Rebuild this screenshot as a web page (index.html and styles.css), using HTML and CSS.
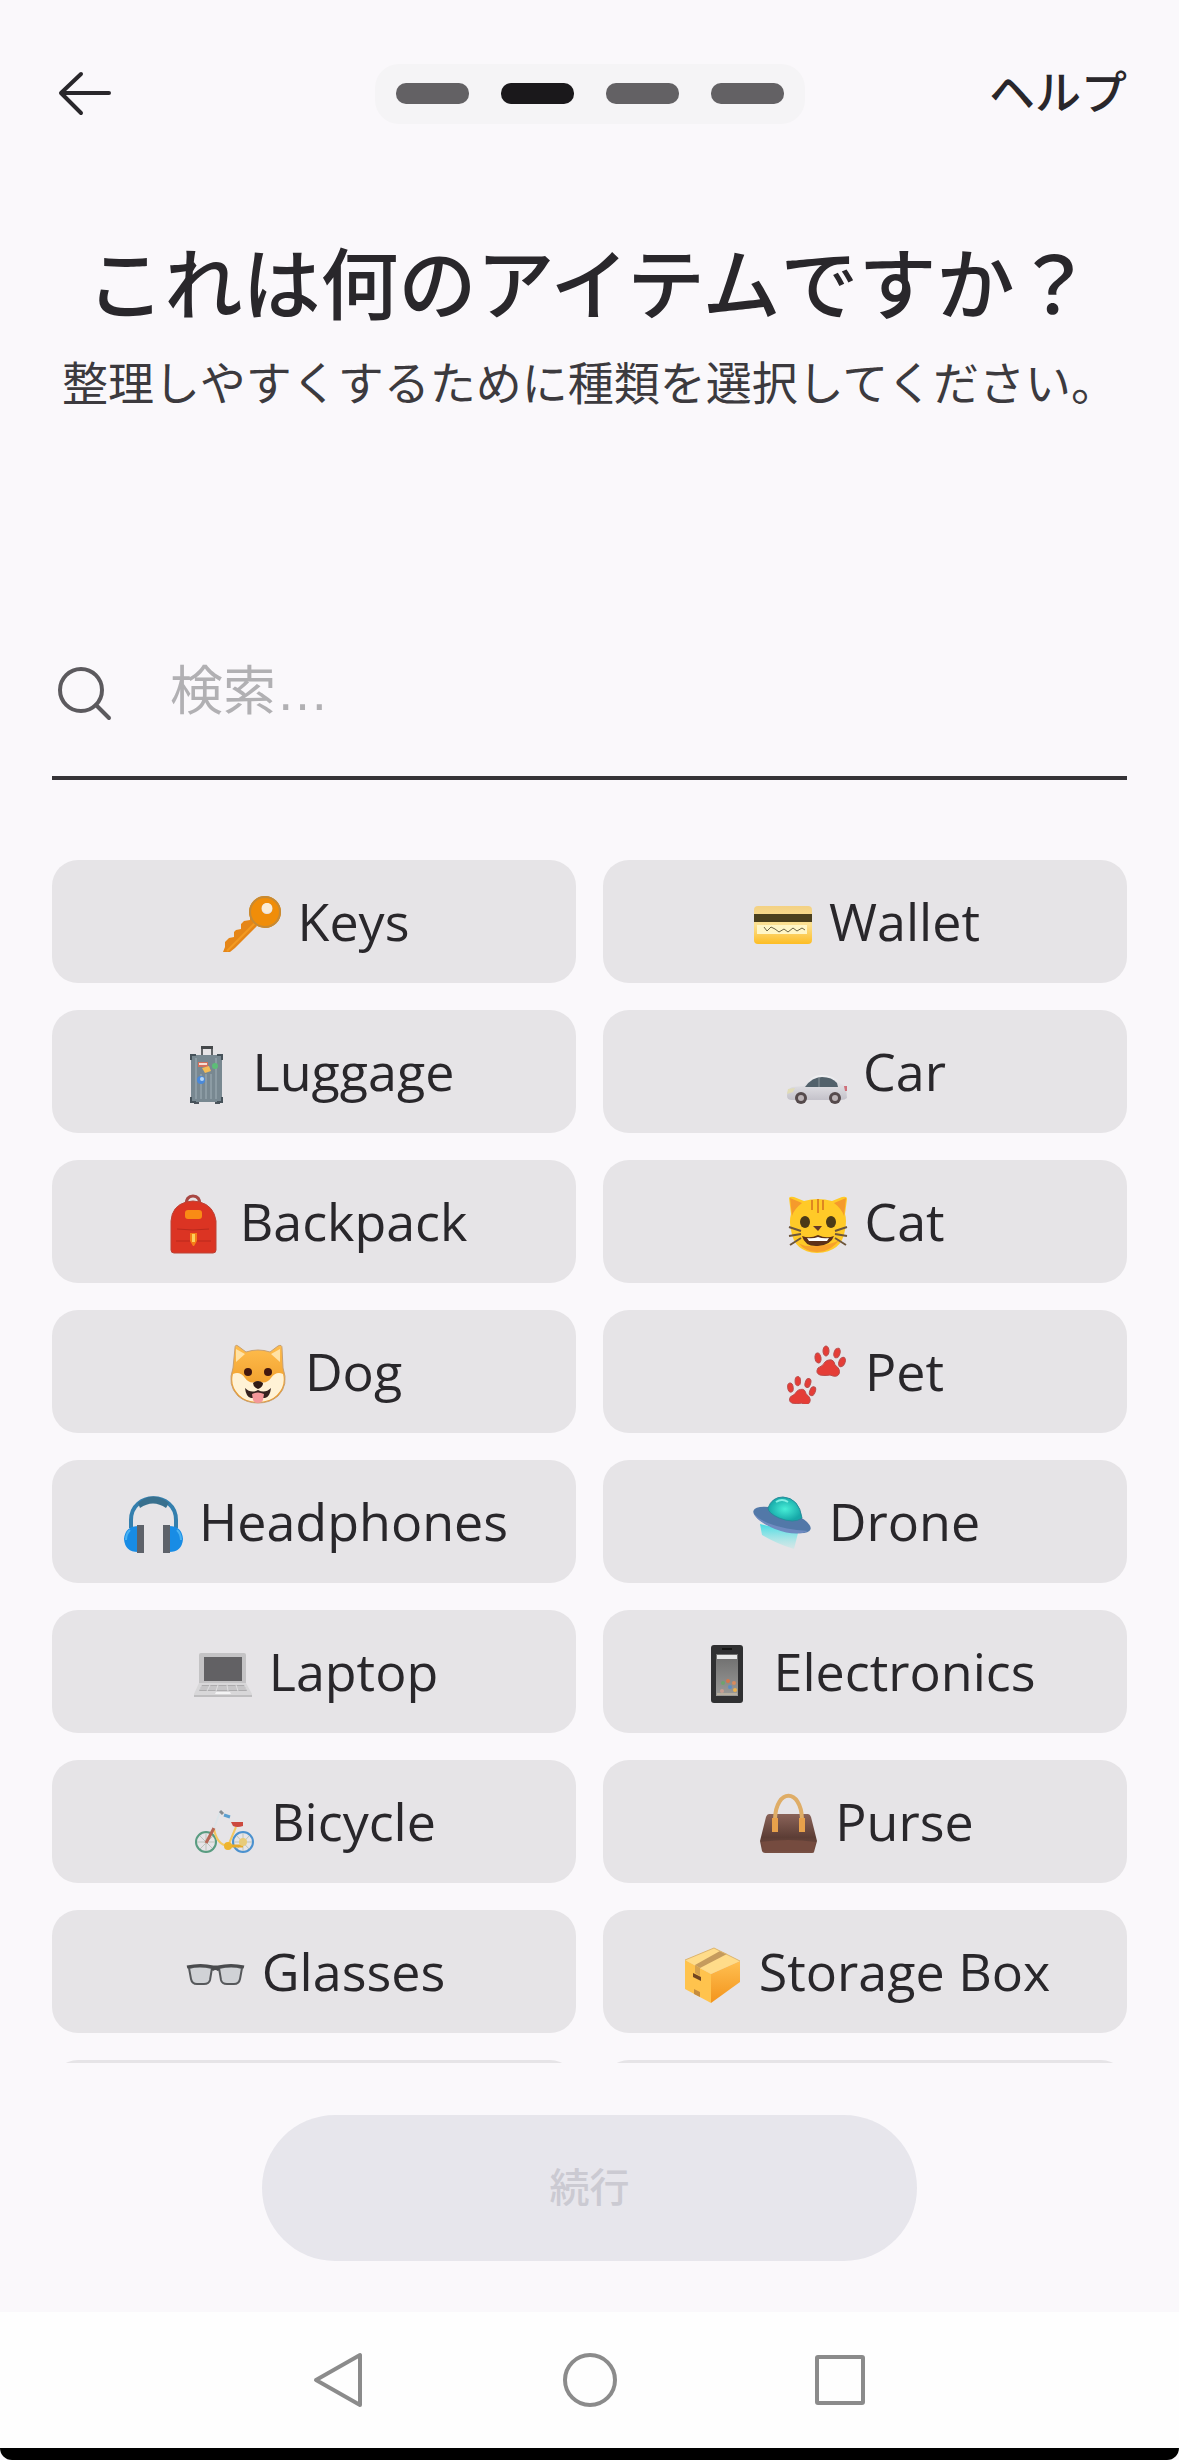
FILE: index.html
```html
<!DOCTYPE html>
<html lang="ja">
<head>
<meta charset="utf-8">
<meta name="viewport" content="width=device-width, initial-scale=1">
<title>これは何のアイテムですか？</title>
<link rel="stylesheet" href="styles.css">
</head>
<body>
<div class="screen">
  <header class="topbar">
    <button class="back" type="button" aria-label="戻る">
      <svg class="back-icon" viewBox="0 0 66 60"><path d="M57 29H10M29 10L9 29L29 49" fill="none" stroke="currentColor" stroke-width="4" stroke-linecap="round" stroke-linejoin="round"/></svg>
    </button>
    <div class="steps">
      <span class="step"></span>
      <span class="step step-current"></span>
      <span class="step"></span>
      <span class="step"></span>
    </div>
    <a class="help" href="#help">ヘルプ</a>
  </header>

  <main class="content">
    <h1 class="title">これは何のアイテムですか？</h1>
    <p class="subtitle">整理しやすくするために種類を選択してください。</p>

    <label class="search">
      <svg class="search-icon" viewBox="0 0 64 64" role="img" aria-label="検索"><g fill="none" stroke="currentColor" stroke-width="4" stroke-linecap="round"><circle cx="29" cy="28" r="21"/><path d="M44 43L57 56"/></g></svg>
      <input class="search-input" type="text" placeholder="検索…">
    </label>

    <div class="list">
      <button class="tile" type="button">
        <svg class="emoji" viewBox="0 0 64 64">
          <path d="M31 25L31 30L25 31L22 34L22 39L17 40L15 42L15 47L10 48L6 52L6 57L4 62H11L16 58L38 36Z" fill="#e58618"/>
          <path d="M8 61L37 32" stroke="#f39a21" stroke-width="2"/>
          <path fill-rule="evenodd" d="M46 6a16 16 0 1 0 0 32a16 16 0 1 0 0-32zM48 13a5 5 0 1 1 0 11a5 5 0 1 1 0-11z" fill="#f08d09"/>
          <circle cx="46" cy="22" r="15" fill="none" stroke="#c58a36" stroke-width="2"/>
          <circle cx="48" cy="18" r="5" fill="#fbecd5"/>
        </svg><span>Keys</span>
      </button>
      <button class="tile" type="button">
        <svg class="emoji" viewBox="0 0 64 64">
          <defs><linearGradient id="card" x2="0" y2="1"><stop offset="0" stop-color="#f3d184"/><stop offset=".5" stop-color="#fbe092"/><stop offset="1" stop-color="#fdbd24"/></linearGradient></defs>
          <rect x="4" y="16" width="58" height="38" rx="4" fill="url(#card)"/>
          <path d="M4 24h58v8H4z" fill="#4a3f1d"/>
          <path d="M7 35h50v9H7z" fill="#fff6c7"/>
          <path d="M14 37l3 4 4-4 4 2 4 3 5-3 4 3 5-4 4 3 5-3 3 2" fill="none" stroke="#6c6445" stroke-width="1"/>
        </svg><span>Wallet</span>
      </button>
      <button class="tile" type="button">
        <svg class="emoji" viewBox="0 0 64 64">
          <path d="M28 15V7h10v8" fill="none" stroke="#626568" stroke-width="2"/><path d="M27 6h12v3H27z" fill="#45484b"/>
          <path d="M20 60h5v4h-5zM41 60h5v4h-5z" fill="#4d545c"/>
          <rect x="17" y="15" width="31" height="47" rx="3" fill="#788891"/>
          <path d="M22 18v41M27 34v25M32 34v25M37 34v25M42 18v41" stroke="#a0afb7" stroke-width="1"/>
          <path d="M17 20v-5h5M43 15h5v5M48 57v5h-5M22 62h-5v-5" fill="none" stroke="#46525a" stroke-width="2"/>
          <path d="M24 22h10v5H24z" fill="#d3705b"/><path d="M25 23h8v2h-8z" fill="#f6ded2"/><path d="M28 28l7-2 2 5-6 2z" fill="#f4bd55"/><circle cx="41" cy="26" r="3" fill="#5dbd77"/><circle cx="27" cy="40" r="4" fill="#4a89d9"/><circle cx="28" cy="39" r="2" fill="#b5d6f6"/>
        </svg><span>Luggage</span>
      </button>
      <button class="tile" type="button">
        <svg class="emoji" viewBox="0 0 64 64">
          <defs><linearGradient id="car" x2="0" y2="1"><stop offset="0" stop-color="#f2f2f4"/><stop offset="1" stop-color="#c4c2ca"/></linearGradient></defs>
          <path d="M20 46Q27 35 37 35Q50 35 56 43L62 47L63 58Q61 60 57 60H8Q3 60 3 56Q3 49 8 47Z" fill="url(#car)"/>
          <path d="M21 47Q28 37 38 37Q48 37 53 43L54 47Z" fill="#52616b"/>
          <path d="M35 37v10" stroke="#8b969c" stroke-width="1"/><path d="M4 49l7-1-2 4-6 2z" fill="#e1dcb7"/><path d="M60 46h3v5h-2z" fill="#cf707a"/>
          <circle cx="17" cy="58" r="6" fill="#554a4c"/><circle cx="17" cy="58" r="3" fill="#bbb3b6"/>
          <circle cx="51" cy="58" r="6" fill="#554a4c"/><circle cx="51" cy="58" r="3" fill="#bbb3b6"/>
        </svg><span>Car</span>
      </button>
      <button class="tile" type="button">
        <svg class="emoji" viewBox="0 0 64 64">
          <path d="M25 15Q25 6 32 6T39 15" fill="none" stroke="#a84743" stroke-width="3"/>
          <path d="M10 31Q11 16 25 12Q32 10 39 12Q53 16 55 31V60Q55 63 52 63H13Q10 63 10 60Z" fill="#db3423" stroke="#bc4236" stroke-width="1"/>
          <path d="M16 39Q32 41 48 39M15 51h35" fill="none" stroke="#b9291d" stroke-width="1"/>
          <rect x="24" y="20" width="17" height="9" rx="3" fill="#f98b15"/>
          <path d="M29 43h7v8l-3 5h-1l-3-5z" fill="#f57d17"/><path d="M31 44h3v8h-3z" fill="#fbd05b"/>
        </svg><span>Backpack</span>
      </button>
      <button class="tile" type="button">
        <svg class="emoji" viewBox="0 0 64 64">
          <path d="M4 8Q5 6 9 7L19 11Q33 7 47 11L57 7Q62 6 62 9L60 24Q62 30 60 40Q57 62 32 63Q9 62 6 40Q4 31 6 24Z" fill="#ffca28"/>
          <path d="M5 8L17 13Q9 19 7 26ZM61 8L49 13Q57 19 59 26Z" fill="#f59a2c"/>
          <path d="M10 48Q18 62 32 62T56 48Q51 54 32 56T10 48Z" fill="#f8a12c"/>
          <path d="M27 10v10M33 9v14M38 10v10" stroke="#de8621" stroke-width="2"/>
          <ellipse cx="20" cy="32" rx="5" ry="6" fill="#4b3a17"/><ellipse cx="46" cy="32" rx="5" ry="6" fill="#4b3a17"/>
          <path d="M28 36h9l-4 5z" fill="#643828"/>
          <path d="M17 46Q25 49 33 45Q41 49 49 46Q46 55 33 56T17 46Z" fill="#5d3018"/><path d="M22 48Q28 49 33 47Q38 49 44 48L42 51H24Z" fill="#fff"/>
          <path d="M4 37l12 4M4 46l12-2M5 55l11-7M62 37l-12 4M62 46l-12-2M61 55l-11-7" stroke="#6d563c" stroke-width="2"/>
        </svg><span>Cat</span>
      </button>
      <button class="tile" type="button">
        <svg class="emoji" viewBox="0 0 64 64">
          <defs><linearGradient id="dog" x2="0" y2="1"><stop offset="0" stop-color="#ffbd4d"/><stop offset="1" stop-color="#eb9420"/></linearGradient></defs>
          <path d="M9 8Q9 4 12 6L20 12Q32 8 44 12L52 6Q56 4 56 8L57 28Q63 45 52 56Q44 63 32 63T12 56Q1 45 7 28Z" fill="url(#dog)" stroke="#c8a071" stroke-width="1"/>
          <path d="M10 9L19 14L10 22ZM54 9L45 14L54 22Z" fill="#ffe2a6"/>
          <path d="M7 34Q14 31 19 38Q24 45 32 41Q40 45 45 38Q50 31 57 34Q60 46 51 55Q44 62 32 62T13 55Q4 46 7 34Z" fill="#fff2d5"/>
          <ellipse cx="22" cy="32" rx="4" ry="4" fill="#43180f"/><ellipse cx="42" cy="32" rx="4" ry="4" fill="#43180f"/>
          <path d="M27 43Q32 39 37 43Q37 47 32 49Q27 47 27 43Z" fill="#301b16"/>
          <path d="M19 48Q25 54 32 50Q39 54 45 48Q44 57 39 58H25Q20 57 19 48Z" fill="#36231f"/>
          <path d="M26 54Q32 51 38 54L37 60Q36 63 32 63T27 60Z" fill="#f4989a"/>
        </svg><span>Dog</span>
      </button>
      <button class="tile" type="button">
        <svg class="emoji" viewBox="0 0 64 64">
          <g fill="#e53d37" stroke="#b94b4b" stroke-width="1">
            <g id="paw"><ellipse cx="32" cy="18" rx="3" ry="5" transform="rotate(-8 32 18)"/><ellipse cx="40" cy="11" rx="3" ry="5"/><ellipse cx="51" cy="13" rx="3" ry="5" transform="rotate(18 51 13)"/><ellipse cx="56" cy="22" rx="3" ry="5" transform="rotate(24 56 22)"/><path d="M43 20Q48 19 49 25Q55 29 53 34Q51 38 44 35Q39 36 34 35Q29 33 32 28Q37 26 39 22Q41 20 43 20Z"/></g>
            <use href="#paw" transform="translate(-25 31) scale(.92)"/>
          </g>
        </svg><span>Pet</span>
      </button>
      <button class="tile" type="button">
        <svg class="emoji" viewBox="0 0 64 64">
          <path d="M11 38V30C11 1 56 1 56 30V38" fill="none" stroke="#347fae" stroke-width="4"/>
          <path d="M18 13Q33 0 49 13L46 18Q33 9 20 18Z" fill="#39708e"/>
          <path d="M19 36Q5 36 4 49Q5 62 18 62ZM49 36Q62 36 63 49Q62 62 49 62Z" fill="#188ce5"/>
          <path d="M10 40Q6 44 6 50M57 40Q61 44 61 50" stroke="#49b2f2" fill="none" stroke-width="2"/>
          <path d="M17 35h7v28h-7zM43 35h7v28h-7z" fill="#5e626a"/>
        </svg><span>Headphones</span>
      </button>
      <button class="tile" type="button">
        <svg class="emoji" viewBox="0 0 64 64">
          <defs><linearGradient id="beam" x2="0" y2="1"><stop offset="0" stop-color="#42dbe3"/><stop offset="1" stop-color="#90ece8" stop-opacity=".2"/></linearGradient><radialGradient id="dome"><stop offset="0" stop-color="#47eed7"/><stop offset="1" stop-color="#16a8a8"/></radialGradient></defs>
          <path d="M10 34L48 43L44 59Q27 54 12 45Z" fill="url(#beam)"/>
          <ellipse cx="32" cy="30" rx="30" ry="10" transform="rotate(18 32 30)" fill="#5278a8"/>
          <path d="M4 24Q17 38 58 41Q46 47 25 39Q8 32 4 24Z" fill="#6f8ac0"/>
          <path d="M18 18Q22 7 33 7Q49 8 52 28Q44 34 29 28Q18 23 18 18Z" fill="url(#dome)" stroke="#288b9b" stroke-width="1"/>
          <path d="M26 12Q32 8 38 12" fill="none" stroke="#83efe3" stroke-width="2"/>
        </svg><span>Drone</span>
      </button>
      <button class="tile" type="button">
        <svg class="emoji" viewBox="0 0 64 64">
          <path d="M11 13H54Q56 13 56 15V43H9V15Q9 13 11 13Z" fill="#c4c3c5"/>
          <path d="M14 17H52V41H14Z" fill="#626164"/>
          <path d="M9 43H56L62 54V57H4V54Z" fill="#d8d7d9"/><path d="M12 45H54L57 51H9Z" fill="#adacae"/>
          <path d="M11 47H55M10 49H56M20 45L17 51M28 45L26 51M37 45L38 51M46 45L48 51" stroke="#dfdee0" stroke-width="1"/><path d="M26 52H40L41 54H25Z" fill="#f4f4f5"/><path d="M4 56h58" stroke="#a6a5a7" stroke-width="1"/>
        </svg><span>Laptop</span>
      </button>
      <button class="tile" type="button">
        <svg class="emoji" viewBox="0 0 64 64">
          <defs><linearGradient id="phone" x2="0" y2="1"><stop offset="0" stop-color="#6d6d6d"/><stop offset="1" stop-color="#9b9a98"/></linearGradient></defs>
          <rect x="16" y="5" width="32" height="58" rx="3" fill="#303032"/>
          <path d="M21 14H43V56H21Z" fill="url(#phone)"/><path d="M22 15H42V19H22Z" fill="#e9e9e9"/><path d="M27 9H37" stroke="#151515" stroke-width="2"/>
          <circle cx="28" cy="43" r="2" fill="#6ea36d"/><circle cx="33" cy="41" r="2" fill="#d87649"/><circle cx="39" cy="43" r="2" fill="#d98a5d"/><circle cx="35" cy="47" r="2" fill="#5b8dc4"/><circle cx="40" cy="50" r="2" fill="#edb14c"/><circle cx="27" cy="51" r="2" fill="#c89d91"/><path d="M22 54h20" stroke="#d7c6a9" stroke-width="1"/>
        </svg><span>Electronics</span>
      </button>
      <button class="tile" type="button">
        <svg class="emoji" viewBox="0 0 64 64" fill="none">
          <path d="M4 52h21M14 42v21M7 45l15 15M22 45L7 60M40 52h21M51 42v21M44 45l14 15M58 45L44 60" stroke="#bcc5bc" stroke-width="1"/>
          <circle cx="14" cy="52" r="10" stroke="#599c81" stroke-width="2"/><circle cx="51" cy="52" r="10" stroke="#4b91cf" stroke-width="2"/>
          <path d="M22 39Q25 55 36 56L44 37" stroke="#f4c862" stroke-width="2"/>
          <path d="M14 53L22 38" stroke="#b66755" stroke-width="3"/><path d="M22 38L28 22" stroke="#dbe4e9" stroke-width="2"/>
          <path d="M28 21L31 24" stroke="#858b91" stroke-width="3"/><path d="M32 25L38 27" stroke="#5b9fd0" stroke-width="3"/>
          <path d="M39 32H51V36Q45 38 41 36Z" fill="#cc493f"/><path d="M35 56H51" stroke="#e6aa2b" stroke-width="3"/><circle cx="36" cy="56" r="4" fill="#eeb42d"/><circle cx="51" cy="52" r="4" fill="#e8cb79"/>
        </svg><span>Bicycle</span>
      </button>
      <button class="tile" type="button">
        <svg class="emoji" viewBox="0 0 64 64">
          <defs><linearGradient id="bag" x2="0" y2="1"><stop offset="0" stop-color="#8a6359"/><stop offset=".6" stop-color="#5c3d35"/><stop offset="1" stop-color="#795044"/></linearGradient></defs>
          <path d="M13 24H52Q54 24 55 27L61 51L58 62Q58 63 56 63H9Q7 63 6 61L4 51L10 27Q11 24 13 24Z" fill="url(#bag)"/>
          <path d="M5 52Q32 48 60 52L57 61H8Z" fill="#754b3f"/>
          <path d="M19 39V29C20-2 45-2 46 29V39" fill="none" stroke="#dfad67" stroke-width="4"/><path d="M16 28h6v14h-6zM43 28h6v14h-6z" fill="#e8a14b"/>
        </svg><span>Purse</span>
      </button>
      <button class="tile" type="button">
        <svg class="emoji" viewBox="0 0 64 64">
          <g fill="#d0d2d6" stroke="#56585b" stroke-width="2" stroke-linejoin="round"><path d="M6 28Q16 25 29 28L27 40Q26 44 21 44H14Q9 44 8 39Z"/><path d="M36 28Q49 25 59 28L57 39Q56 44 51 44H44Q39 44 38 40Z"/></g>
          <path d="M4 27Q18 24 30 27H35Q48 24 61 27M29 30Q32 27 36 30" fill="none" stroke="#4a4b4e" stroke-width="3"/>
        </svg><span>Glasses</span>
      </button>
      <button class="tile" type="button">
        <svg class="emoji" viewBox="0 0 64 64">
          <defs><linearGradient id="boxside" x2="0" y2="1"><stop offset="0" stop-color="#ffc052"/><stop offset="1" stop-color="#f3941c"/></linearGradient></defs>
          <path d="M34 8L60 21L31 34L5 20Z" fill="#ffdc8a"/><path d="M5 20L31 34V63L5 49Z" fill="#ffc34d"/><path d="M60 21L31 34V63L60 42Z" fill="url(#boxside)"/>
          <path d="M40 11L47 14L20 28L15 25Z" fill="#c59b5d"/><path d="M15 25L20 28V36L15 33Z" fill="#d6a24e"/>
          <path d="M13 33L21 37V41L13 37Z" fill="#714421"/><path d="M14 49L20 52V57L14 54Z" fill="#c68c3d"/>
          <path d="M5 20L34 8L60 21" fill="none" stroke="#ddb46d" stroke-width="1"/>
        </svg><span>Storage Box</span>
      </button>
      <div class="tile" aria-hidden="true"></div>
      <div class="tile" aria-hidden="true"></div>
    </div>

    <button class="continue" type="button" disabled>続行</button>
  </main>

  <nav class="system-nav">
    <button class="nav-button" type="button" aria-label="戻る"><svg class="nav-icon" viewBox="0 0 56 56"><path d="M48 3V53L4 28Z"/></svg></button>
    <button class="nav-button" type="button" aria-label="ホーム"><svg class="nav-icon" viewBox="0 0 56 56"><circle cx="28" cy="28" r="25"/></svg></button>
    <button class="nav-button" type="button" aria-label="履歴"><svg class="nav-icon" viewBox="0 0 56 56"><rect x="5" y="5" width="46" height="46" rx="1"/></svg></button>
  </nav>
  <div class="bezel"></div>
</div>
</body>
</html>
```
FILE: styles.css
```css
* {
  box-sizing: border-box;
}

body {
  margin: 0;
  background: #fff;
  color: #29272b;
  font-family: "Noto Sans CJK JP", "Noto Sans", sans-serif;
}

button {
  margin: 0;
  padding: 0;
  border: 0;
  background: none;
  color: inherit;
  font: inherit;
}

svg {
  display: block;
  flex: none;
}

.screen {
  display: flex;
  flex-direction: column;
  height: 100vh;
  background: #faf8fb;
}

.topbar {
  display: grid;
  grid-template-columns: 1fr auto 1fr;
  align-items: center;
  padding: 64px 52px 0;
}

.back {
  justify-self: start;
}

.back-icon {
  width: 66px;
  height: 60px;
}

.steps {
  display: flex;
  gap: 32px;
  padding: 19px 21px 20px;
  border-radius: 24px;
  background: #f5f4f6;
}

.step {
  width: 73px;
  height: 21px;
  border-radius: 10px;
  background: #636164;
}

.step-current {
  background: #1a181b;
}

.help {
  justify-self: end;
  padding-bottom: 10px;
  color: inherit;
  font-size: 46px;
  font-weight: 500;
  line-height: 50px;
  text-decoration: none;
}

.content {
  display: flex;
  flex: 1;
  flex-direction: column;
  min-height: 0;
  padding: 108px 52px 51px;
}

.title {
  margin: 0;
  font-size: 78px;
  font-weight: 500;
  line-height: 96px;
  text-align: center;
  white-space: nowrap;
}

.subtitle {
  margin: 22px 0 0;
  color: #3c3a3e;
  font-size: 46px;
  line-height: 60px;
  text-align: center;
  white-space: nowrap;
}

.search {
  display: flex;
  align-items: center;
  gap: 54px;
  margin-top: 202px;
  padding: 50px 0;
  border-bottom: 4px solid #353337;
  color: #5c5a5e;
}

.search-icon {
  width: 64px;
  height: 64px;
}

.search-input {
  flex: 1;
  min-width: 0;
  height: 64px;
  padding: 0 0 6px;
  border: 0;
  outline: 0;
  background: none;
  color: #29272b;
  font-family: "Liberation Sans", "Noto Sans CJK JP", sans-serif;
  font-size: 53px;
}

.search-input::placeholder {
  color: #b1b0b3;
  opacity: 1;
}

.list {
  display: grid;
  flex: 1;
  grid-template-columns: 1fr 1fr;
  grid-auto-rows: 123px;
  gap: 27px;
  min-height: 0;
  margin-top: 80px;
  overflow: hidden;
}

.tile {
  display: flex;
  align-items: center;
  justify-content: center;
  gap: 15px;
  border-radius: 26px;
  background: #e6e4e7;
  font-family: "Open Sans", "Noto Sans", sans-serif;
  font-size: 52px;
  line-height: 72px;
}

.tile span {
  padding-bottom: 2px;
}

.emoji {
  width: 64px;
  height: 64px;
}

.continue {
  flex: none;
  align-self: center;
  width: 61%;
  height: 146px;
  margin-top: 52px;
  padding-bottom: 6px;
  border-radius: 73px;
  background: #e7e6ec;
  color: #cbcad2;
  font-size: 40px;
  font-weight: 500;
}

.system-nav {
  display: flex;
  align-items: center;
  justify-content: center;
  gap: 194px;
  height: 136px;
  background: #fefefe;
}

.nav-icon {
  width: 56px;
  height: 56px;
  fill: none;
  stroke: #8b8b8b;
  stroke-width: 4;
  stroke-linejoin: round;
}

.bezel {
  height: 12px;
  border-radius: 0 0 12px 12px;
  background: #000;
}
```
